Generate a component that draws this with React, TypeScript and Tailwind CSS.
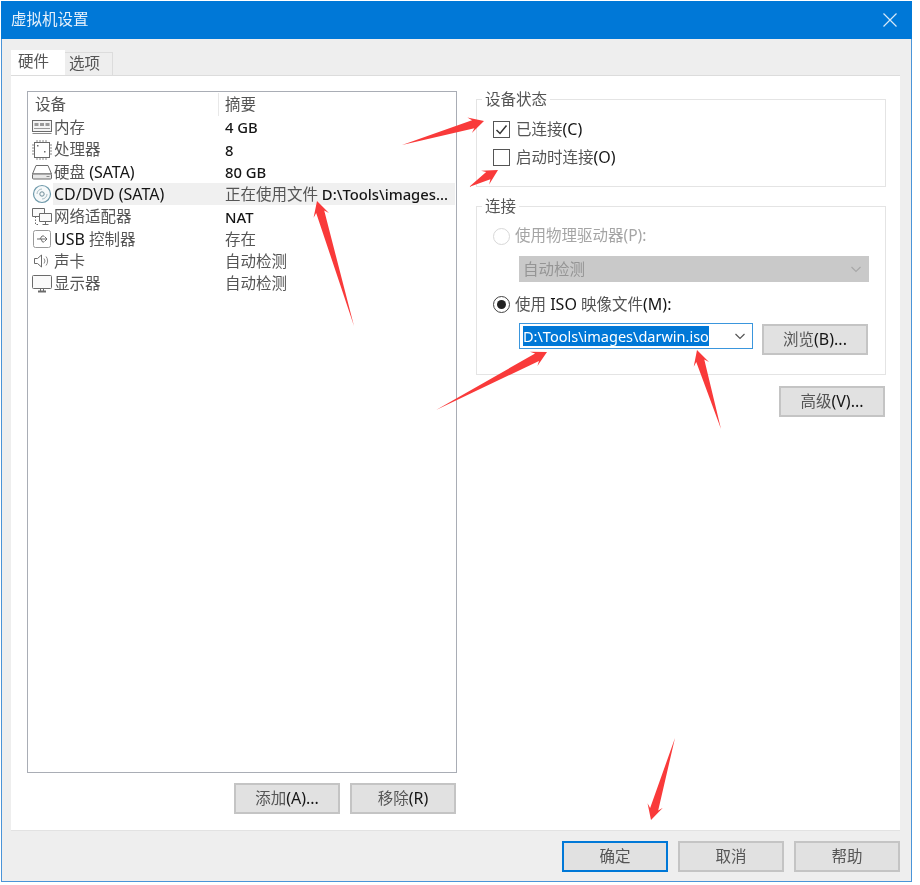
const FONT = "font-['Noto_Sans','Noto_Sans_CJK_SC',sans-serif]";

const S = "#6b6b6b";

/** Splits a label so Han runs and Latin runs each get their own tone, as in the reference. */
function T({ children, compact }: { children: string; compact?: boolean }) {
  const parts = children.split(/([\u4e00-\u9fff]+)/).filter(Boolean);
  return (
    <>
      {parts.map((p, i) =>
        /[\u4e00-\u9fff]/.test(p) ? (
          <span key={i} className="text-[15.5px] text-[#555]">{p}</span>
        ) : (
          <span key={i} className={compact ? "text-[14.8px] font-medium text-[#151515]" : "text-[16px] text-[#151515]"}>{p}</span>
        ),
      )}
    </>
  );
}

function MemoryIcon() {
  return (
    <svg width="22" height="16" viewBox="0 0 22 16" fill="none" stroke={S}>
      <rect x="1.500" y="1.500" width="19" height="11" fill="#f4f4f4" />
      <rect x="3.500" y="4" width="4" height="3" fill="#9a9a9a" stroke="none" />
      <rect x="9" y="4" width="4" height="3" fill="#9a9a9a" stroke="none" />
      <rect x="14.500" y="4" width="4" height="3" fill="#9a9a9a" stroke="none" />
      <path d="M3 9.500h16" stroke="#9a9a9a" />
      <path d="M1.500 14.500h19" stroke="#8a8a8a" />
    </svg>
  );
}
function CpuIcon() {
  return (
    <svg width="22" height="22" viewBox="0 0 22 22" fill="none" stroke={S}>
      <rect x="3.500" y="3.500" width="15" height="15" />
      <path d="M6 1v2M9 1v2M12 1v2M15 1v2M6 19v2M9 19v2M12 19v2M15 19v2M1 6h2M1 9h2M1 12h2M1 15h2M19 6h2M19 9h2M19 12h2M19 15h2" stroke="#8a8a8a" />
      <rect x="6" y="6" width="1.500" height="1.500" fill={S} stroke="none" />
      <rect x="13" y="12" width="1.500" height="1.500" fill={S} stroke="none" />
    </svg>
  );
}
function DiskIcon() {
  return (
    <svg width="22" height="18" viewBox="0 0 22 18" fill="none" stroke={S}>
      <path d="M5 2.500h12l3.500 8.500H1.500z" />
      <rect x="1.500" y="11" width="19" height="5" rx="1" fill="#e8e8e8" />
      <path d="M15.500 13.500h3" stroke="#8a8a8a" />
    </svg>
  );
}
function CdIcon() {
  return (
    <svg width="22" height="22" viewBox="0 0 22 22" fill="none">
      <circle cx="11" cy="11" r="8.500" stroke="#6f9aab" fill="#f6f9fa" strokeWidth="1.200" />
      <circle cx="11" cy="11" r="2.200" stroke="#6d8b97" />
      <path d="M6 11a5 5 0 0 1 5-5M11 16a5 5 0 0 0 5-5" stroke="#a8bcc4" />
    </svg>
  );
}
function NetworkIcon() {
  return (
    <svg width="22" height="20" viewBox="0 0 22 20" fill="none" stroke={S}>
      <path d="M1.500 1.500h12v8h-12z" fill="#fafafa" />
      <path d="M8.500 6.500h12v8h-12z" fill="#fafafa" />
      <path d="M14.500 14.500v3M11.500 17.500h6" />
      <path d="M4.500 9.500v8h4" strokeDasharray="1.500 1.500" />
    </svg>
  );
}
function UsbIcon() {
  return (
    <svg width="22" height="22" viewBox="0 0 22 22" fill="none" stroke={S}>
      <rect x="2.500" y="2.500" width="17" height="17" rx="2" stroke="#9a9a9a" />
      <path d="M6 11h10M13.500 8.500 16 11l-2.500 2.500M9 11l2-3h2M10 11l1.500 3H13" />
    </svg>
  );
}
function SoundIcon() {
  return (
    <svg width="22" height="16" viewBox="0 0 22 16" fill="none" stroke={S}>
      <path d="M3.500 5.500h3l4-3.500v12l-4-3.500h-3z" />
      <path d="M13 5.500a4 4 0 0 1 0 5M15 3.500a7 7 0 0 1 0 9" stroke="#8a8a8a" />
    </svg>
  );
}
function MonitorIcon() {
  return (
    <svg width="22" height="20" viewBox="0 0 22 20" fill="none" stroke={S}>
      <rect x="1.500" y="1.500" width="19" height="13" rx="1" fill="#fafafa" />
      <path d="M7 17.500h8" strokeWidth="2" />
      <path d="M9.500 15v2M12.500 15v2" />
    </svg>
  );
}

const rows = [
  { icon: <MemoryIcon />, name: "内存", summary: "4 GB" },
  { icon: <CpuIcon />, name: "处理器", summary: "8" },
  { icon: <DiskIcon />, name: "硬盘 (SATA)", summary: "80 GB" },
  { icon: <CdIcon />, name: "CD/DVD (SATA)", summary: "正在使用文件 D:\\Tools\\images...", active: true },
  { icon: <NetworkIcon />, name: "网络适配器", summary: "NAT" },
  { icon: <UsbIcon />, name: "USB 控制器", summary: "存在" },
  { icon: <SoundIcon />, name: "声卡", summary: "自动检测" },
  { icon: <MonitorIcon />, name: "显示器", summary: "自动检测" },
];

function Btn({ label, primary, className = "" }: { label: string; primary?: boolean; className?: string }) {
  return (
    <button
      className={`h-[31px] w-[106px] bg-[#e1e1e1] border-2 ${
        primary ? "border-[#0078d7]" : "border-[#c4c4c4]"
      } ${className}`}
    >
      <T>{label}</T>
    </button>
  );
}

function Group({ title, className = "", children }: { title: string; className?: string; children: React.ReactNode }) {
  return (
    <fieldset className={`border border-[#e4e4e4] px-[16px] ${className}`}>
      <legend className="-ml-[11px] px-[3px] leading-[20px]">
        <T>{title}</T>
      </legend>
      {children}
    </fieldset>
  );
}

function Check({ checked, label }: { checked?: boolean; label: string }) {
  return (
    <div className="flex h-[28px] items-center gap-[6px]">
      <span className="flex h-[17px] w-[17px] items-center justify-center border border-[#555] bg-white">
        {checked && (
          <svg width="13" height="13" viewBox="0 0 13 13" fill="none" stroke="#333" strokeWidth="1.500">
            <path d="M1.500 7l3.500 3.500 6.500-8" />
          </svg>
        )}
      </span>
      <span>
        <T>{label}</T>
      </span>
    </div>
  );
}

function Radio({ checked, disabled, label }: { checked?: boolean; disabled?: boolean; label: string }) {
  return (
    <div className="flex h-[24px] items-center gap-[5px]">
      <span
        className={`flex h-[17px] w-[17px] items-center justify-center rounded-full border ${
          disabled ? "border-[#d8d8d8]" : "border-[#444]"
        }`}
      >
        {checked && <span className="h-[9px] w-[9px] rounded-full bg-[#222]" />}
      </span>
      {disabled ? <span className="text-[15.5px] text-[#a5a5a5]">{label}</span> : <span><T>{label}</T></span>}
    </div>
  );
}

function Chevron({ color }: { color: string }) {
  return (
    <svg width="12" height="7" viewBox="0 0 12 7" fill="none" stroke={color} strokeWidth="1.200">
      <path d="M1.500 1l4.500 4.500L10.500 1" />
    </svg>
  );
}

function arrowPoints(tail: [number, number], tip: [number, number], head = 15, w = 8, neck = 4.200) {
  const [tx, ty] = tail;
  const [px, py] = tip;
  const len = Math.hypot(px - tx, py - ty);
  const ux = (px - tx) / len;
  const uy = (py - ty) / len;
  const nx = -uy;
  const ny = ux;
  const at = (d: number, o: number) => `${px - ux * d + nx * o},${py - uy * d + ny * o}`;
  return [`${tx},${ty}`, at(head * 0.75, neck), at(head, w), at(0, 0), at(head, -w), at(head * 0.75, -neck)].join(" ");
}

const arrows: [number, number, number, number][] = [
  [402, 145, 484, 121],
  [469, 187, 498, 170],
  [354, 326, 317, 201],
  [436, 410, 547, 352],
  [721, 429, 697, 350],
  [675, 738, 651, 820],
];

export default function App() {
  return (
    <div className={`relative h-[885px] w-[920px] overflow-hidden bg-white pt-px pl-px blur-[0.4px] ${FONT}`}>
      <div className="flex h-[881px] w-[911px] flex-col border border-t-0 border-[#4a94d8] bg-[#eeeeee]">
        <div className="-mx-px flex h-[38px] shrink-0 items-center justify-between bg-[#0078d7] pl-[10px] pr-[15px] text-white">
          <span className="text-[15.500px] text-[#e6f1fb]">虚拟机设置</span>
          <svg width="14" height="14" viewBox="0 0 14 14" fill="none" stroke="#d6e9f8" strokeWidth="1.200">
            <path d="M.5.5l13 13M13.500.5l-13 13" />
          </svg>
        </div>

        <div className="ml-[9px] mt-[11px] flex h-[25px] items-end">
          <div className="z-10 flex h-[25px] w-[54px] items-center bg-white pb-[2px] pl-[7px] leading-none">
            <T>硬件</T>
          </div>
          <div className="flex h-[23px] w-[48px] items-center border border-b-0 border-l-0 border-[#dcdcdc] pl-[4px] leading-none">
            <T>选项</T>
          </div>
        </div>

        <div className="ml-[9px] flex h-[755px] w-[889px] border-t border-[#dcdcdc] bg-white pt-[15px] pl-[16px] shadow-[0_1px_0_#e2e2e2]">
          <div className="flex w-[430px] flex-col">
            <div className="h-[682px] border border-[#a9adb5] pt-px">
              <div className="flex h-[23px] items-center">
                <span className="w-[190px] pl-[7px]">
                  <T>设备</T>
                </span>
                <span className="flex h-full items-center border-l border-[#e8e8e8] pl-[6px]">
                  <T>摘要</T>
                </span>
              </div>
              {rows.map((r) => (
                <div key={r.name} className="flex h-[22.350px] items-center leading-none">
                  <span className="flex w-[25px] shrink-0 justify-end">{r.icon}</span>
                  <div className={`flex h-full flex-1 items-center ${r.active ? "bg-[#f0f0f0]" : ""}`}>
                    <span className="w-[172px] pl-[1px] whitespace-nowrap">
                      <T>{r.name}</T>
                    </span>
                    <span className="whitespace-nowrap">
                      <T compact>{r.summary}</T>
                    </span>
                  </div>
                  <span className="w-px" />
                </div>
              ))}
            </div>
            <div className="mt-[10px] flex justify-end gap-[10px] pr-[1px]">
              <Btn label="添加(A)..." />
              <Btn label="移除(R)" />
            </div>
          </div>

          <div className="ml-[19px] flex w-[410px] flex-col">
            <Group title="设备状态" className="-mt-[2px] h-[98px]">
              <div className="pt-[6px]">
                <Check checked label="已连接(C)" />
                <Check label="启动时连接(O)" />
              </div>
            </Group>
            <Group title="连接" className="mt-[9px] h-[179px]">
              <div className="pt-[8px]">
                <Radio disabled label="使用物理驱动器(P):" />
                <div className="ml-[26px] mt-[8px] flex h-[26px] w-[350px] items-center justify-between bg-[#c9c9c9] pl-[4px] pr-[7px] pt-px text-[15.5px] text-[#959595]">
                  自动检测
                  <Chevron color="#a8a8a8" />
                </div>
                <div className="mt-[10px]">
                  <Radio checked label="使用 ISO 映像文件(M):" />
                </div>
                <div className="ml-[26px] mt-[7px] flex items-start">
                  <div className="flex h-[26px] w-[234px] items-center justify-between border border-[#3a96dd] pl-[3px] pr-[6px]">
                    <span className="bg-[#0078d7] text-[14.500px] leading-[20px] text-white">D:\Tools\images\darwin.iso</span>
                    <Chevron color="#555" />
                  </div>
                  <Btn label="浏览(B)..." className="ml-[9px] mt-px" />
                </div>
              </div>
            </Group>
            <div className="mt-[11px] flex justify-end pr-px">
              <Btn label="高级(V)..." />
            </div>
          </div>
        </div>

        <div className="ml-[560px] mt-[11px] flex gap-[10px]">
          <Btn label="确定" primary />
          <Btn label="取消" />
          <Btn label="帮助" />
        </div>
      </div>

      <svg className="pointer-events-none absolute left-0 top-0" width="920" height="885" viewBox="0 0 920 885">
        {arrows.map(([a, b, c, d]) => (
          <polygon key={`${a}-${b}`} points={arrowPoints([a, b], [c, d])} fill="#f93a3a" />
        ))}
      </svg>
    </div>
  );
}
